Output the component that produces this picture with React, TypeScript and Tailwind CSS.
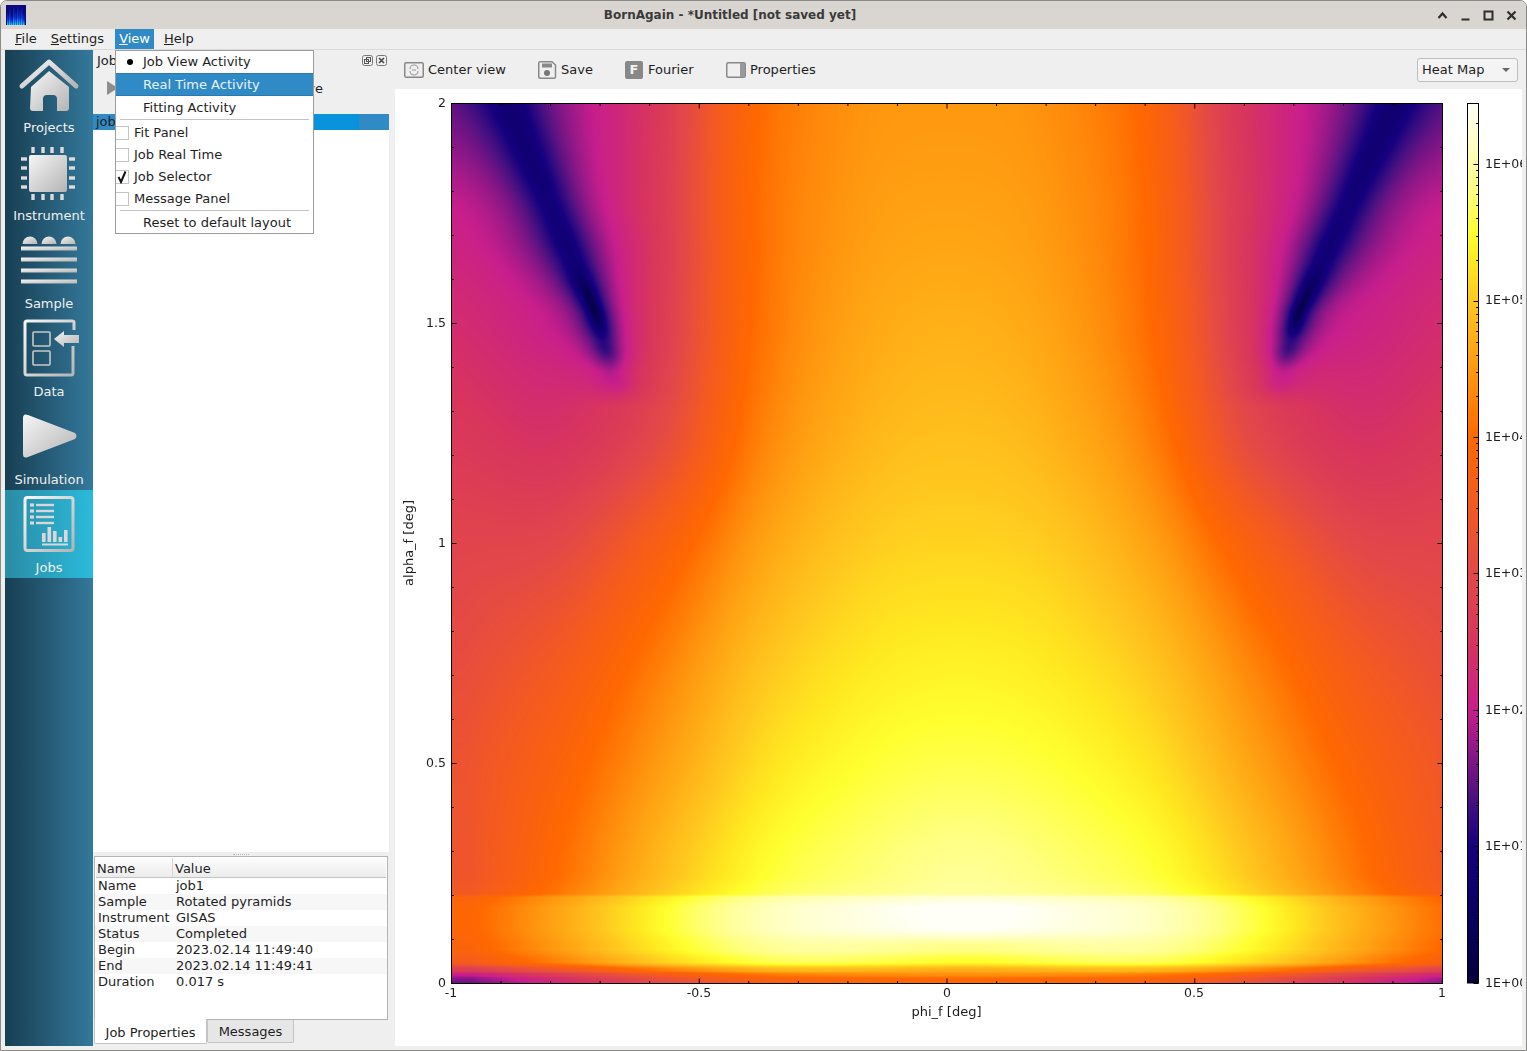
import React, { useEffect, useRef } from "react";

const STOPS: [number, number, number, number][] = [
  [0, 5, 0, 60], [0.5, 10, 0, 96], [1, 21, 0, 127], [1.3, 64, 15, 128], [1.6, 122, 21, 133], [2, 200, 30, 140],
  [2.5, 216, 52, 94], [3, 227, 72, 72], [3.5, 244, 90, 32], [4, 255, 104, 0], [4.5, 255, 154, 16], [5, 255, 200, 31],
  [5.3, 255, 234, 32], [5.5, 255, 255, 48], [5.8, 255, 255, 128], [6, 255, 255, 168], [6.446, 255, 255, 248],
];
const VTOP = 6.446;

function colorOf(v: number): [number, number, number] {
  if (v <= 0) return [5, 0, 60];
  for (let i = 1; i < STOPS.length; i++) {
    if (v <= STOPS[i][0]) {
      const a = STOPS[i - 1];
      const b = STOPS[i];
      const t = (v - a[0]) / (b[0] - a[0]);
      return [a[1] + (b[1] - a[1]) * t, a[2] + (b[2] - a[2]) * t, a[3] + (b[3] - a[3]) * t];
    }
  }
  return [255, 255, 248];
}

// rows: y = 0, .25, .5 ... 2 ; columns: |x| = 0, .2, .4, .6, .8, 1
const GRID = [
  [6.0, 5.85, 5.6, 5.0, 4.2, 3.4],
  [5.9, 5.75, 5.5, 4.9, 4.1, 3.35],
  [5.6, 5.5, 5.2, 4.55, 3.85, 3.3],
  [5.35, 5.25, 4.9, 4.2, 3.5, 3.1],
  [5.1, 5.0, 4.55, 3.7, 3.0, 2.9],
  [4.9, 4.75, 4.2, 3.0, 2.45, 2.6],
  [4.75, 4.6, 4.05, 2.8, 2.25, 2.35],
  [4.6, 4.5, 4.03, 2.75, 2.25, 2.2],
  [4.5, 4.42, 3.95, 2.6, 2.05, 1.85],
];

function cr(p0: number, p1: number, p2: number, p3: number, t: number) {
  return 0.5 * (2 * p1 + (p2 - p0) * t + (2 * p0 - 5 * p1 + 4 * p2 - p3) * t * t + (3 * p1 - p0 - 3 * p2 + p3) * t * t * t);
}

function mainField(ax: number, y: number) {
  const gx = Math.min(ax / 0.2, 4.9999);
  const gy = Math.min(y / 0.25, 7.9999);
  const ix = Math.floor(gx);
  const iy = Math.floor(gy);
  const tx = gx - ix;
  const ty = gy - iy;
  const row = (r: number) => {
    const R = GRID[Math.max(0, Math.min(8, r))];
    const at = (c: number) => (c < 0 ? R[-c] : c > 5 ? 2 * R[5] - R[4] : R[c]);
    return cr(at(ix - 1), at(ix), at(ix + 1), at(ix + 2), tx);
  };
  return cr(row(iy - 1), row(iy), row(iy + 1), row(iy + 2), ty);
}

function lerpTable(tb: number[][], x: number) {
  if (x <= tb[0][0]) return tb[0][1];
  for (let i = 1; i < tb.length; i++) {
    if (x <= tb[i][0]) {
      const t = (x - tb[i - 1][0]) / (tb[i][0] - tb[i - 1][0]);
      const s = t * t * (3 - 2 * t);
      return tb[i - 1][1] + (tb[i][1] - tb[i - 1][1]) * s;
    }
  }
  return tb[tb.length - 1][1];
}

const OFF_C = [[0, -2.1], [0.01, -2.0], [0.02, -1.6], [0.03, -1.3], [0.05, -0.5], [0.08, -0.15], [0.13, 0.5], [0.17, 0.55], [0.195, 0.35], [0.205, 0.03], [0.25, 0]];
const OFF_E = [[0, -1.9], [0.01, -1.75], [0.02, -1.4], [0.03, -0.7], [0.05, 0.2], [0.08, 0.45], [0.13, 0.55], [0.17, 0.55], [0.195, 0.45], [0.205, 0.1], [0.25, 0]];
const DEPTH = [[1.3, 0], [1.38, 0.6], [1.45, 1.3], [1.53, 2.2], [1.65, 1.5], [1.8, 1.35], [2, 1.2]];
const WIDTH = [[1.35, 0.06], [1.5, 0.09], [1.7, 0.15], [2, 0.15]];

function field(x: number, y: number) {
  const sx = x - 0.04 * (1 - y / 2);
  const ax = Math.abs(sx);
  let v = mainField(ax, y);
  const e = Math.min(1, (1.06 * ax * ax) / (ax * ax + 0.06));
  v += lerpTable(OFF_C, y) * (1 - e) + lerpTable(OFF_E, y) * e;
  const D = lerpTable(DEPTH, y);
  if (D > 0) {
    const up = x < 0 ? 0.37 : 0.41;
    const slope = y < 1.527 ? 0.25 : up;
    const xc = 0.71 + slope * (y - 1.527);
    const d = Math.abs(x) - xc;
    const s = lerpTable(WIDTH, y);
    const eps = s * Math.pow(10, -D / 2);
    v += Math.log10((d * d + eps * eps) / (d * d + s * s));
  }
  return v;
}

function HeatMap() {
  const ref = useRef<HTMLCanvasElement>(null);
  useEffect(() => {
    const c = ref.current;
    if (!c) return;
    const ctx = c.getContext("2d");
    if (!ctx) return;
    const W = c.width;
    const H = c.height;
    const img = ctx.createImageData(W, H);
    for (let j = 0; j < H; j++) {
      for (let i = 0; i < W; i++) {
        const [r, g, b] = colorOf(field(-1 + (2 * i) / (W - 1), 2 * (1 - j / (H - 1))));
        const k = (j * W + i) * 4;
        img.data[k] = r;
        img.data[k + 1] = g;
        img.data[k + 2] = b;
        img.data[k + 3] = 255;
      }
    }
    ctx.putImageData(img, 0, 0);
  }, []);
  return <canvas ref={ref} width={992} height={881} className="block w-[992px] h-[881px]" />;
}

function PlotOverlay() {
  const xt: React.ReactNode[] = [];
  for (let k = 0; k <= 20; k++) {
    const x = 451.5 + (k * 991) / 20;
    const len = k % 5 === 0 ? 5 : 2.5;
    xt.push(<path key={"x" + k} d={`M${x} 983.5v${-len}M${x} 103.5v${len}`} />);
  }
  const yt: React.ReactNode[] = [];
  for (let k = 0; k <= 20; k++) {
    const y = 983.5 - (k * 880) / 20;
    const len = k % 5 === 0 ? 5 : 2.5;
    yt.push(<path key={"y" + k} d={`M451.5 ${y}h${len}M1442.5 ${y}h${-len}`} />);
  }
  const ct: React.ReactNode[] = [];
  for (let dec = 0; dec <= 6; dec++) {
    for (let m = 1; m <= 9; m++) {
      const v = dec + Math.log10(m);
      if (v > VTOP) continue;
      const y = Math.round(982.6 - 136.4 * v) + 0.5;
      ct.push(<path key={`c${dec}${m}`} d={`M1478.5 ${y}h${m === 1 ? -5 : -2.5}`} />);
    }
  }
  const yLabels: [string, number][] = [["2", 103], ["1.5", 323], ["1", 543], ["0.5", 763], ["0", 983]];
  const xLabels: [string, number][] = [["-1", 451], ["-0.5", 699], ["0", 947], ["0.5", 1194], ["1", 1442]];
  const cLabels: [string, number][] = [["1E+06", 164], ["1E+05", 300], ["1E+04", 437], ["1E+03", 573], ["1E+02", 710], ["1E+01", 846], ["1E+00", 983]];
  return (
    <svg viewBox="395 89 1127 957" className="absolute inset-0 w-[1127px] h-[957px]" fill="#1c1c1c" fontSize="12.5" fontFamily="'DejaVu Sans', sans-serif">
      <defs>
        <linearGradient id="cbar" x1="0" y1="1" x2="0" y2="0">
          {STOPS.map((s) => (
            <stop key={s[0]} offset={s[0] / VTOP} stopColor={`rgb(${s[1]},${s[2]},${s[3]})`} />
          ))}
        </linearGradient>
      </defs>
      <rect x="1468" y="103.5" width="10.5" height="879.5" fill="url(#cbar)" />
      <rect x="451.5" y="103.5" width="991" height="880" fill="none" stroke="#000" />
      <rect x="1467.5" y="103.5" width="11" height="879.5" fill="none" stroke="#000" />
      <g stroke="#000" fill="none">
        {xt}
        {yt}
        {ct}
      </g>
      {yLabels.map(([t, y]) => (
        <text key={t} x="446" y={y + 3.5} textAnchor="end">{t}</text>
      ))}
      {xLabels.map(([t, x]) => (
        <text key={t} x={x} y="997" textAnchor="middle">{t}</text>
      ))}
      {cLabels.map(([t, y]) => (
        <text key={t} x="1485" y={y + 3.5}>{t}</text>
      ))}
      <text x="946.5" y="1015.5" textAnchor="middle" fontSize="13">phi_f [deg]</text>
      <text transform="translate(412.5 543) rotate(-90)" textAnchor="middle" fontSize="13">alpha_f [deg]</text>
    </svg>
  );
}

function Grad({ id }: { id: string }) {
  return (
    <defs>
      <linearGradient id={id} x1="0" y1="0" x2="1" y2="1">
        <stop offset="0" stopColor="#f6f6f6" />
        <stop offset="1" stopColor="#b4b4b4" />
      </linearGradient>
    </defs>
  );
}

function SideItem({ top, label, active, children }: { top: number; label: string; active?: boolean; children: React.ReactNode }) {
  return (
    <div className={active ? "h-[88px] flex flex-col bg-gradient-to-r from-[#2a8ca6] to-[#2abadb]" : "h-[88px] flex flex-col"}>
      <svg viewBox={`5 ${top} 88 69`} className="w-[88px] h-[69px] block">
        {children}
      </svg>
      <div className="h-[18px] leading-[18px] text-[13px] text-center text-[#f0f0f0]">{label}</div>
    </div>
  );
}

function Sidebar() {
  const pinsH = [33, 43, 52, 62];
  const pinsV = [159, 168, 178, 187];
  return (
    <div className="w-[88px] shrink-0 bg-gradient-to-r from-[#183f53] to-[#34799c]">
      <SideItem top={50} label="Projects">
        <Grad id="g1" />
        <path d="M22 86 L49 62 L76 86" fill="none" stroke="url(#g1)" strokeWidth="5" strokeLinecap="round" strokeLinejoin="round" />
        <path d="M31 87 L49 71 L69 87 V108 Q69 111 66 111 H57 V99 Q57 95 53 95 H47 Q43 95 43 99 V111 H33 Q30 111 30 108 Z" fill="url(#g1)" />
      </SideItem>
      <SideItem top={138} label="Instrument">
        <Grad id="g2" />
        <rect x="29" y="155" width="38" height="37" rx="2" fill="url(#g2)" />
        {pinsH.map((x) => (
          <g key={x} fill="#dcdcdc">
            <rect x={x - 1.7} y="147" width="3.4" height="6" />
            <rect x={x - 1.7} y="194" width="3.4" height="6" />
          </g>
        ))}
        {pinsV.map((y) => (
          <g key={y} fill="#dcdcdc">
            <rect x="21" y={y - 1.7} width="6" height="3.4" />
            <rect x="69" y={y - 1.7} width="6" height="3.4" />
          </g>
        ))}
      </SideItem>
      <SideItem top={226} label="Sample">
        <Grad id="g3" />
        {[30, 49, 68].map((x) => (
          <path key={x} d={`M${x - 7.5} 244 A7.5 7.5 0 0 1 ${x + 7.5} 244 Z`} fill="url(#g3)" />
        ))}
        {[246.5, 257.5, 268.5, 279.5].map((y) => (
          <rect key={y} x="21" y={y} width="56" height="4" fill="url(#g3)" />
        ))}
      </SideItem>
      <SideItem top={314} label="Data">
        <Grad id="g4" />
        <path d="M74 330 V322 Q74 321 72 321 H27 Q25 321 25 323 V373 Q25 375 27 375 H71 Q73 375 73 373 V346" fill="none" stroke="url(#g4)" strokeWidth="3" />
        <rect x="33" y="332" width="17" height="14" rx="1" fill="none" stroke="#c8c8c8" strokeWidth="1.6" />
        <rect x="33" y="351" width="17" height="14" rx="1" fill="none" stroke="#c8c8c8" strokeWidth="1.6" />
        <path d="M54 339 L64 331 V335 H79 V343 H64 V347 Z" fill="url(#g4)" />
      </SideItem>
      <SideItem top={402} label="Simulation">
        <Grad id="g5" />
        <path d="M23 418 Q23 413 28 415 L75 433 Q78 436 75 439 L28 457 Q23 459 23 454 Z" fill="url(#g5)" />
      </SideItem>
      <SideItem top={490} label="Jobs" active>
        <Grad id="g6" />
        <rect x="25" y="497.5" width="48" height="53" rx="2.5" fill="none" stroke="url(#g6)" strokeWidth="3" />
        {[505, 511, 517, 523].map((y) => (
          <g key={y}>
            <rect x="30" y={y - 1.6} width="4" height="3.2" fill="#d8d8d8" />
            <rect x="36" y={y - 1.2} width="18" height="2.4" fill="#d8d8d8" />
          </g>
        ))}
        <rect x="42" y="533" width="3.6" height="9" fill="#d8d8d8" />
        <rect x="47.5" y="527" width="3.6" height="15" fill="#d8d8d8" />
        <rect x="53" y="531" width="3.6" height="11" fill="#d8d8d8" />
        <rect x="58.5" y="537" width="3.6" height="5" fill="#d8d8d8" />
        <rect x="64" y="530" width="3.6" height="12" fill="#d8d8d8" />
        <rect x="42" y="543.5" width="26" height="2" fill="#d8d8d8" />
      </SideItem>
    </div>
  );
}

function Menu() {
  const Radio = ({ label, on, active, cls }: { label: string; on?: boolean; active?: boolean; cls: string }) => (
    <div className={(active ? "flex items-center bg-[#2f8ac5] border-y border-[#2a78ac] " : "flex items-center ") + cls}>
      <span className="w-[27px] flex justify-center">{on && <span className="w-[6px] h-[6px] ml-[1px] rounded-full bg-black" />}</span>
      <span className={active ? "text-[#e8f2f9]" : ""}>{label}</span>
    </div>
  );
  const Check = ({ label, on }: { label: string; on?: boolean }) => (
    <div className="h-[22px] flex items-center">
      <span className="w-[13px] h-[14px] border-y border-r border-[#c4c4c4] bg-white flex items-center justify-center">
        {on && (
          <svg viewBox="0 0 12 14" className="w-[12px] h-[14px]">
            <path d="M2.5 7 L5 12 L9.5 1.5" fill="none" stroke="#111" strokeWidth="2" />
          </svg>
        )}
      </span>
      <span className="ml-[5px]">{label}</span>
    </div>
  );
  return (
    <div className="absolute left-[115px] top-[50px] w-[199px] h-[184px] bg-white border border-[#9c9c9c] text-[13px] text-[#1e1e1e] z-10">
      <Radio label="Job View Activity" on cls="h-[22px]" />
      <Radio label="Real Time Activity" active cls="h-[23px]" />
      <Radio label="Fitting Activity" cls="h-[23px]" />
      <div className="mx-[4px] h-[1px] bg-[#c4c4c4] mb-[2px]" />
      <Check label="Fit Panel" />
      <Check label="Job Real Time" />
      <Check label="Job Selector" on />
      <Check label="Message Panel" />
      <div className="mx-[4px] h-[1px] bg-[#c4c4c4]" />
      <div className="h-[23px] flex items-center pl-[27px]">Reset to default layout</div>
    </div>
  );
}

function JobPanel() {
  const rows = [
    ["Name", "job1"],
    ["Sample", "Rotated pyramids"],
    ["Instrument", "GISAS"],
    ["Status", "Completed"],
    ["Begin", "2023.02.14 11:49:40"],
    ["End", "2023.02.14 11:49:41"],
    ["Duration", "0.017 s"],
  ];
  return (
    <div className="w-[296px] shrink-0 flex flex-col text-[13px] text-[#1e1e1e]">
      <div className="h-[21px] flex items-center justify-between pl-[4px] pr-[2px]">
        <span>Job Selector</span>
        <span className="flex gap-[3px]">
          <svg viewBox="0 0 11 11" className="w-[11px] h-[11px]">
            <rect x=".5" y=".5" width="10" height="10" rx="2" fill="none" stroke="#777" />
            <rect x="2.5" y="4.5" width="4" height="4" fill="none" stroke="#555" />
            <rect x="4.5" y="2.5" width="4" height="4" fill="none" stroke="#555" />
          </svg>
          <svg viewBox="0 0 11 11" className="w-[11px] h-[11px]">
            <rect x=".5" y=".5" width="10" height="10" rx="2" fill="none" stroke="#777" />
            <path d="M3 3 L8 8 M8 3 L3 8" stroke="#444" strokeWidth="1.5" />
          </svg>
        </span>
      </div>
      <div className="h-[43px] flex items-start pt-[8px] pl-[14px] justify-between pr-[66px]">
        <svg viewBox="0 0 12 16" className="w-[12px] h-[16px] mt-[1px]">
          <path d="M0 1 L11 8 L0 15 Z" fill="#8e8e8e" />
        </svg>
        <span>Remove</span>
      </div>
      <div className="h-[16px] bg-[#2f8ac5] relative leading-[16px] pl-[3px] shrink-0">
        <span className="absolute left-[100px] top-0 h-full w-[166px] bg-[#0a93dd]" />
        <span className="relative">job1</span>
      </div>
      <div className="flex-1 bg-white" />
      <div className="h-[4px] flex justify-center items-center shrink-0">
        <span className="w-[16px] border-t border-dotted border-[#bbb]" />
      </div>
      <div className="h-[190px] shrink-0 flex flex-col pl-[1px] pr-[1px]">
        <div className="h-[164px] border border-[#b4b4b4] bg-white shrink-0">
          <div className="h-[20px] flex items-center bg-gradient-to-b from-[#fcfcfc] to-[#ececec] border-b border-[#c4c4c4] mx-[1px] mt-[1px]">
            <span className="w-[77px] pl-[1px] h-full leading-[22px] border-r border-[#d4d4d4]">Name</span>
            <span className="pl-[2px] h-full leading-[22px]">Value</span>
          </div>
          {rows.map((r, i) => (
            <div key={r[0]} className={i % 2 ? "h-[16px] leading-[16px] flex bg-[#f7f7f7]" : "h-[16px] leading-[16px] flex"}>
              <span className="w-[81px] pl-[3px]">{r[0]}</span>
              <span>{r[1]}</span>
            </div>
          ))}
        </div>
        <div className="flex items-start">
          <div className="w-[113px] h-[25px] bg-white border-x border-b border-[#c4c4c4] rounded-b-[2px] leading-[26px] text-center -mt-[1px] pt-[1px]">Job Properties</div>
          <div className="w-[87px] h-[23px] bg-[#e6e6e6] border-x border-b border-[#c4c4c4] rounded-b-[2px] leading-[23px] text-center">Messages</div>
        </div>
      </div>
    </div>
  );
}

function ToolBtn({ label, children, cls, gap }: { label: string; children: React.ReactNode; cls: string; gap: string }) {
  return (
    <div className={"flex items-center " + cls}>
      {children}
      <span className={gap}>{label}</span>
    </div>
  );
}

function Toolbar() {
  return (
    <div className="h-[39px] shrink-0 flex items-center pl-[9px] pr-[4px] text-[13px] text-[#1e1e1e]">
      <ToolBtn label="Center view" cls="w-[134px]" gap="ml-[4px]">
        <svg viewBox="0 0 20 16" className="w-[20px] h-[16px]">
          <rect x=".75" y=".75" width="18.5" height="14.5" rx="1.5" fill="#efefef" stroke="#888" strokeWidth="1.5" />
          <path d="M6 7 A4 4 0 0 1 14 7 M14 9 A4 4 0 0 1 6 9" fill="none" stroke="#999" strokeWidth="1.1" />
          <path d="M8 8 H12" stroke="#999" strokeWidth="1.2" />
        </svg>
      </ToolBtn>
      <ToolBtn label="Save" cls="w-[87px]" gap="ml-[4px]">
        <svg viewBox="0 0 19 18" className="w-[19px] h-[18px]">
          <path d="M1.5 .75 H14 L17.5 4 V15.5 Q17.5 17.25 16 17.25 H2.5 Q.75 17.25 .75 15.5 V2 Q.75 .75 2 .75 Z" fill="#efefef" stroke="#888" strokeWidth="1.5" />
          <rect x="4" y="2.5" width="10" height="4" fill="#888" />
          <circle cx="9" cy="12" r="3" fill="#777" />
        </svg>
      </ToolBtn>
      <ToolBtn label="Fourier" cls="w-[101px]" gap="ml-[5px]">
        <span className="w-[18px] h-[18px] rounded-[2px] bg-[#888] text-[#f2f2f2] font-bold text-[13px] leading-[18px] text-center">F</span>
      </ToolBtn>
      <ToolBtn label="Properties" cls="" gap="ml-[4px]">
        <svg viewBox="0 0 20 16" className="w-[20px] h-[16px]">
          <rect x=".75" y=".75" width="18.5" height="14.5" rx="1.5" fill="#efefef" stroke="#888" strokeWidth="1.5" />
          <rect x="14" y="1" width="5" height="14" fill="#999" />
        </svg>
      </ToolBtn>
      <div className="ml-auto w-[101px] h-[24px] border border-[#bdbdbd] rounded-[3px] bg-[#f4f4f4] flex items-center justify-between pl-[4px] pr-[7px]">
        <span>Heat Map</span>
        <span className="w-0 h-0 border-x-[4px] border-x-transparent border-t-[4px] border-t-[#666]" />
      </div>
    </div>
  );
}

function Logo() {
  const xs = [1, 3, 5, 7, 9, 11, 13, 15, 17];
  const hs = [8, 4, 11, 2, 6, 1, 5, 3, 9];
  return (
    <svg viewBox="0 0 20 20" className="w-[20px] h-[20px] ml-[5px]">
      <defs>
        <linearGradient id="lg" x1="0" y1="0" x2="0" y2="1">
          <stop offset="0" stopColor="#0c0c8c" />
          <stop offset=".55" stopColor="#0a3ae0" />
          <stop offset="1" stopColor="#28d0ff" />
        </linearGradient>
      </defs>
      <rect width="20" height="20" fill="#0a0a78" />
      {xs.map((x, i) => (
        <rect key={x} x={x} y={hs[i]} width="1.6" height={20 - hs[i]} fill="url(#lg)" />
      ))}
    </svg>
  );
}

export default function App() {
  return (
    <div className="relative w-[1527px] h-[1051px] overflow-hidden bg-white font-['DejaVu_Sans',sans-serif]">
      <div className="w-full h-full flex flex-col bg-[#efefef] border border-[#8a8a88] rounded-t-[7px] overflow-hidden">
        <div className="h-[28px] shrink-0 bg-[#d9d5d1] flex items-center relative">
          <Logo />
          <div className="absolute inset-0 flex items-center justify-center text-[12px] font-bold text-[#3a3a3a] pr-[67px]">BornAgain - *Untitled [not saved yet]</div>
          <div className="ml-auto flex items-center gap-[12px] pr-[9px] relative">
            <svg viewBox="0 0 11 11" className="w-[11px] h-[11px]"><path d="M1.5 8 L5.5 3.5 L9.5 8" fill="none" stroke="#2e2e2e" strokeWidth="2.2" /></svg>
            <svg viewBox="0 0 11 11" className="w-[11px] h-[11px]"><path d="M1.5 9.5 H9.5" stroke="#2e2e2e" strokeWidth="2" /></svg>
            <svg viewBox="0 0 11 11" className="w-[11px] h-[11px]"><rect x="1.5" y="1.5" width="8" height="8" fill="none" stroke="#2e2e2e" strokeWidth="2" /></svg>
            <svg viewBox="0 0 11 11" className="w-[11px] h-[11px]"><path d="M1.5 1.5 L9.5 9.5 M9.5 1.5 L1.5 9.5" stroke="#2e2e2e" strokeWidth="2.2" /></svg>
          </div>
        </div>
        <div className="h-[21px] shrink-0 flex pl-[10px] gap-[6px] text-[13px] text-[#1e1e1e] leading-[20px] border-b border-[#dadada]">
          <span className="px-[4px]"><u>F</u>ile</span>
          <span className="px-[4px]"><u>S</u>ettings</span>
          <span className="px-[4px] ml-[1px] bg-[#2f8ac5] text-white"><u>V</u>iew</span>
          <span className="px-[4px]"><u>H</u>elp</span>
        </div>
        <div className="flex-1 min-h-0 flex pl-[4px] pr-[4px] pb-[4px]">
          <Sidebar />
          <JobPanel />
          <div className="w-[6px] shrink-0" />
          <div className="flex-1 min-w-0 flex flex-col">
            <Toolbar />
            <div className="flex-1 min-h-0 relative bg-white overflow-hidden pl-[56px] pt-[14px]">
              <HeatMap />
              <PlotOverlay />
            </div>
          </div>
        </div>
      </div>
      <Menu />
    </div>
  );
}
